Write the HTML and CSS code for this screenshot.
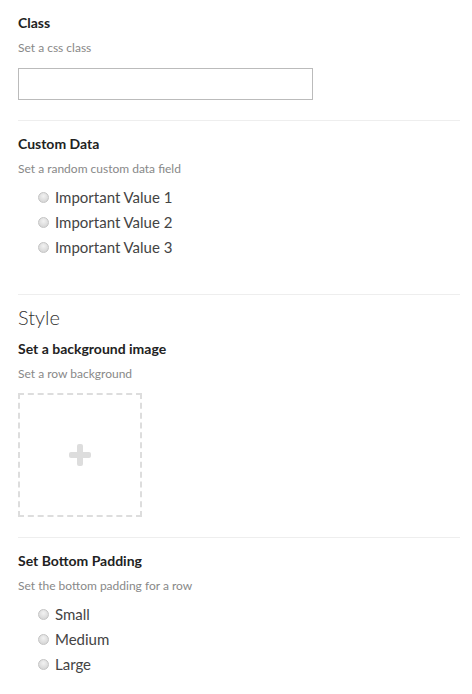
FILE: index.html
```html
<!DOCTYPE html>
<html>
<head>
<meta charset="utf-8">
<link rel="stylesheet" href="styles.css">
</head>
<body>
<div class="panel">
  <div class="section">
    <div class="label">Class</div>
    <div class="help">Set a css class</div>
    <input class="text-input" type="text">
  </div>
  <div class="section">
    <div class="label">Custom Data</div>
    <div class="help">Set a random custom data field</div>
    <div class="radios">
      <label class="radio"><span class="dot"></span>Important Value 1</label>
      <label class="radio"><span class="dot"></span>Important Value 2</label>
      <label class="radio"><span class="dot"></span>Important Value 3</label>
    </div>
  </div>
  <div class="section group">
    <div class="group-title">Style</div>
    <div class="label">Set a background image</div>
    <div class="help">Set a row background</div>
    <div class="uploader"><span class="plus"></span></div>
  </div>
  <div class="section">
    <div class="label">Set Bottom Padding</div>
    <div class="help">Set the bottom padding for a row</div>
    <div class="radios">
      <label class="radio"><span class="dot"></span>Small</label>
      <label class="radio"><span class="dot"></span>Medium</label>
      <label class="radio"><span class="dot"></span>Large</label>
    </div>
  </div>
</div>
</body>
</html>
```
FILE: styles.css
```css
html, body {
  margin: 0;
  padding: 0;
  background: #fff;
}
body {
  font-family: Lato, "Open Sans", sans-serif;
  color: #222;
}
.panel {
  margin-left: 18px;
  width: 442px;
}
.section {
  border-top: 1px solid #eeeeee;
  padding: 14px 0 20px;
}
.section:first-child {
  border-top: none;
}
.label {
  font-size: 14px;
  font-weight: 700;
  line-height: 18px;
  color: #222;
}
.help {
  font-size: 12px;
  line-height: 14px;
  color: #888;
  margin-top: 9px;
}
.text-input {
  display: block;
  box-sizing: border-box;
  width: 295px;
  height: 32px;
  margin: 13px 0 0;
  border: 1px solid #bbbbbb;
  padding: 0 6px;
  font: inherit;
  outline: none;
}
.radios {
  display: flex;
  flex-direction: column;
  padding-left: 20px;
  margin-top: 9px;
  padding-bottom: 14px;
}
.radio {
  display: flex;
  align-items: center;
  gap: 6px;
  font-size: 15px;
  line-height: 25px;
  color: #444;
}
.dot {
  box-sizing: border-box;
  width: 11px;
  height: 11px;
  border-radius: 50%;
  border: 1px solid #c4c4c4;
  background: radial-gradient(circle at 50% 35%, #f2f2f2, #cfcfcf);
}
.group-title {
  font-size: 20px;
  font-weight: 300;
  line-height: 24px;
  color: #333;
  margin-top: -4px;
  margin-bottom: 11px;
}
.uploader {
  box-sizing: border-box;
  width: 124px;
  height: 124px;
  margin-top: 12px;
  border: 2px dashed #dddddd;
  display: flex;
  align-items: center;
  justify-content: center;
}
.plus {
  position: relative;
  width: 22px;
  height: 22px;
}
.plus::before, .plus::after {
  content: "";
  position: absolute;
  background: #dddddd;
  border-radius: 2px;
}
.plus::before {
  left: 0;
  right: 0;
  top: 8px;
  height: 6px;
}
.plus::after {
  top: 0;
  bottom: 0;
  left: 8px;
  width: 6px;
}
```
